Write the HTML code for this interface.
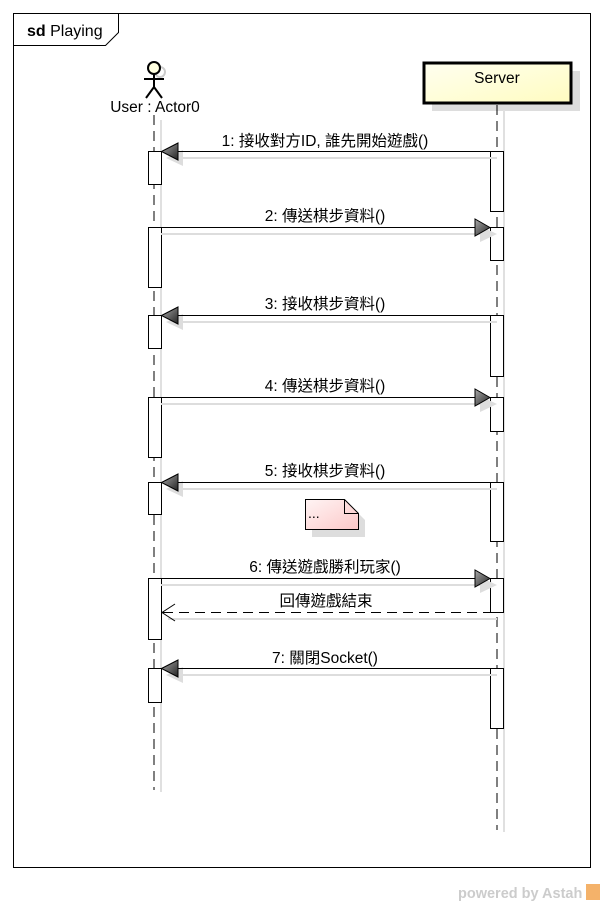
<!DOCTYPE html>
<html><head><meta charset="utf-8"><style>
html,body{margin:0;padding:0;background:#fff;width:604px;height:906px;overflow:hidden}
text{font-family:"Liberation Sans","Noto Sans CJK TC",sans-serif;fill:#000}
</style></head><body>
<svg width="604" height="906" viewBox="0 0 604 906" xmlns="http://www.w3.org/2000/svg">
<defs>
<linearGradient id="sv" x1="0" y1="0" x2="1" y2="1"><stop offset="0" stop-color="#fffff0"/><stop offset="1" stop-color="#fffcc0"/></linearGradient>
<linearGradient id="nt" x1="0" y1="0" x2="1" y2="1"><stop offset="0" stop-color="#fff4f4"/><stop offset="1" stop-color="#fcc8c8"/></linearGradient>
<linearGradient id="ar" x1="0" y1="0" x2="1" y2="1"><stop offset="0" stop-color="#aaa"/><stop offset="1" stop-color="#222"/></linearGradient>
</defs>
<rect x="13.5" y="13.5" width="577" height="854" fill="none" stroke="#000"/>
<path d="M13.5 45.5 H105.5 L118.5 32.5 V13.5" fill="none" stroke="#000"/>
<text x="27" y="36" style="font-size:16px"><tspan font-weight="bold">sd</tspan> Playing</text>
<g stroke="#ccc" stroke-width="2" fill="none"><circle cx="160" cy="72" r="5"/></g>
<circle cx="154" cy="68" r="6" fill="#ffffe0" stroke="#000" stroke-width="2"/>
<g stroke="#000" stroke-width="2"><line x1="154" y1="74" x2="154" y2="88"/><line x1="144" y1="79" x2="164" y2="79"/><line x1="154" y1="87" x2="146" y2="98"/><line x1="154" y1="87" x2="162" y2="98"/></g>
<text x="155" y="112" text-anchor="middle" style="font-size:15.5px">User : Actor0</text>
<rect x="432" y="71" width="148" height="40" fill="#ddd"/>
<rect x="424" y="63" width="147" height="40" fill="url(#sv)" stroke="#000" stroke-width="3"/>
<text x="497" y="83" text-anchor="middle" style="font-size:15.5px">Server</text>
<line x1="161" y1="120" x2="161" y2="792" stroke="#e0e0e0" stroke-width="2"/>
<line x1="504" y1="110" x2="504" y2="832" stroke="#e0e0e0" stroke-width="2"/>
<line x1="154" y1="115" x2="154" y2="790" stroke="#000" stroke-dasharray="10,6"/>
<line x1="497" y1="105" x2="497" y2="830" stroke="#000" stroke-dasharray="10,6"/>
<g fill="#fff" stroke="#000">
<rect x="148.5" y="151.5" width="13" height="33"/><rect x="148.5" y="227.5" width="13" height="60"/>
<rect x="148.5" y="315.5" width="13" height="33"/><rect x="148.5" y="397.5" width="13" height="60"/>
<rect x="148.5" y="482.5" width="13" height="32"/><rect x="148.5" y="578.5" width="13" height="61"/>
<rect x="148.5" y="668.5" width="13" height="34"/>
<rect x="490.5" y="151.5" width="13" height="60"/><rect x="490.5" y="227.5" width="13" height="33"/>
<rect x="490.5" y="315.5" width="13" height="61"/><rect x="490.5" y="397.5" width="13" height="34"/>
<rect x="490.5" y="482.5" width="13" height="59"/><rect x="490.5" y="578.5" width="13" height="34"/>
<rect x="490.5" y="668.5" width="13" height="60"/>
</g>
<g stroke="#ddd" stroke-width="2">
<line x1="168" y1="158" x2="497" y2="158"/><line x1="168" y1="322" x2="497" y2="322"/>
<line x1="168" y1="489" x2="497" y2="489"/><line x1="168" y1="675" x2="497" y2="675"/>
<line x1="161" y1="234" x2="485" y2="234"/><line x1="161" y1="404" x2="485" y2="404"/>
<line x1="161" y1="585" x2="485" y2="585"/><line x1="168" y1="619" x2="497" y2="619"/>
</g>
<g fill="#ddd">
<path d="M166 158 L183 150 L183 166Z"/><path d="M166 322 L183 314 L183 330Z"/><path d="M166 489 L183 481 L183 497Z"/><path d="M166 675 L183 667 L183 683Z"/>
<path d="M497 234 L480 226 L480 242Z"/><path d="M497 404 L480 396 L480 412Z"/><path d="M497 585 L480 577 L480 593Z"/>
</g>
<g stroke="#000">
<line x1="178" y1="151.5" x2="490" y2="151.5"/><line x1="178" y1="315.5" x2="490" y2="315.5"/>
<line x1="178" y1="482.5" x2="490" y2="482.5"/><line x1="178" y1="668.5" x2="490" y2="668.5"/>
<line x1="161" y1="227.5" x2="475" y2="227.5"/><line x1="161" y1="397.5" x2="475" y2="397.5"/>
<line x1="161" y1="578.5" x2="475" y2="578.5"/>
<line x1="163" y1="612.5" x2="490" y2="612.5" stroke-dasharray="10,6"/>
<path d="M175 604 L162 612.5 L175 621" fill="none"/>
</g>
<g fill="url(#ar)" stroke="#000">
<path d="M161.5 151.5 L178 143 L178 160Z"/><path d="M161.5 315.5 L178 307 L178 324Z"/><path d="M161.5 482.5 L178 474 L178 491Z"/><path d="M161.5 668.5 L178 660 L178 677Z"/>
<path d="M490 227.5 L475 219 L475 236Z"/><path d="M490 397.5 L475 389 L475 406Z"/><path d="M490 578.5 L475 570 L475 587Z"/>
</g>
<g text-anchor="middle" style="font-size:15.5px">
<text x="325" y="146">1: 接收對方ID, 誰先開始遊戲()</text>
<text x="325" y="221">2: 傳送棋步資料()</text>
<text x="325" y="309">3: 接收棋步資料()</text>
<text x="325" y="391">4: 傳送棋步資料()</text>
<text x="325" y="476">5: 接收棋步資料()</text>
<text x="325" y="572">6: 傳送遊戲勝利玩家()</text>
<text x="326" y="606">回傳遊戲結束</text>
<text x="325" y="663">7: 關閉Socket()</text>
</g>
<path d="M312 505 H350 L365 520 V537 H312Z" fill="#ddd"/>
<path d="M305.5 499.5 H344.5 L358.5 513.5 V529.5 H305.5Z" fill="url(#nt)" stroke="#000"/>
<path d="M344.5 499.5 V513.5 H358.5" fill="none" stroke="#000"/>
<text x="308" y="518" style="font-size:14px">...</text>
<text x="458" y="898" font-weight="bold" style="fill:#ccc;font-size:14.5px">powered by Astah</text>
<rect x="586" y="884" width="14" height="16" fill="#f4b26a"/>
</svg>
</body></html>
